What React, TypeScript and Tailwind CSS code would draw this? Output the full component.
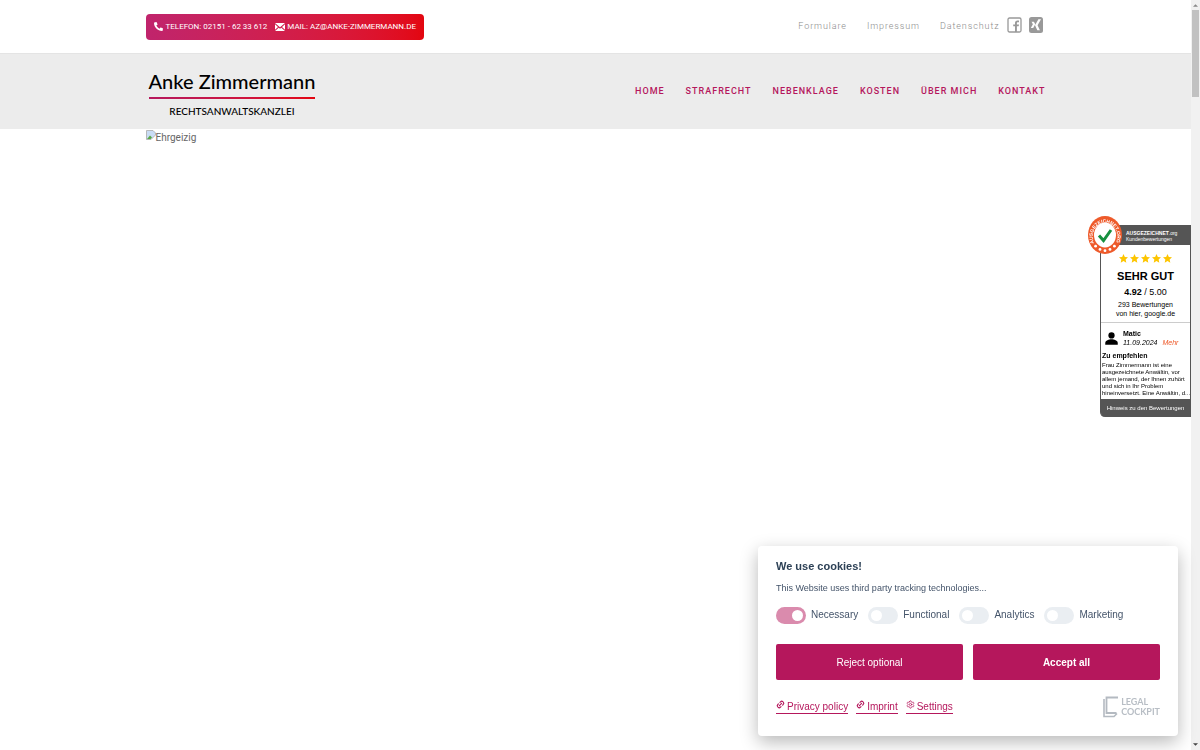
import React from 'react';
import { Link2, Settings } from 'lucide-react';
import { FaPhoneAlt } from 'react-icons/fa';

const metaLinks = ['Formulare', 'Impressum', 'Datenschutz'];
const navItems = ['Home', 'Strafrecht', 'Nebenklage', 'Kosten', 'Über mich', 'Kontakt'];
const categories = [
  { label: 'Necessary', active: true },
  { label: 'Functional', active: false },
  { label: 'Analytics', active: false },
  { label: 'Marketing', active: false },
];

const TopBar: React.FC = () => (
  <div className="border-b border-[#e4e4e4]">
    <div className="max-w-[900px] mx-auto h-[53px] flex items-center justify-between">
      <div className="flex items-center gap-[8px] h-[26px] px-[8px] rounded-[4px] bg-linear-to-r from-[#c0246c] to-[#e3060f] text-white text-[8px] uppercase whitespace-nowrap">
        <a href="#telefon" className="flex items-center gap-[3px]">
          <FaPhoneAlt className="size-[9px]" />
          Telefon: 02151 - 62 33 612
        </a>
        <a href="#mail" className="flex items-center gap-[2px]">
          <svg viewBox="0 0 20 16" className="w-[10px] h-2" fill="#fff">
            <path d="M0 0H20L10 8.500ZM0 2.500L6 8L0 13.500ZM20 2.500L14 8L20 13.500ZM7.500 9.300L10 11.300L12.500 9.300L20 16H0Z" />
          </svg>
          Mail: az@anke-zimmermann.de
        </a>
      </div>

      <div className="flex items-center text-[#8c8c8c] font-light text-[9px] tracking-widest">
        <div className="flex items-center gap-[20px]">
          {metaLinks.map((label) => (
            <a key={label} href="#meta">{label}</a>
          ))}
        </div>
        <a href="#facebook" aria-label="Facebook" className="ml-[7px] mb-[3px]">
          <svg viewBox="0 0 15 16" className="w-[15px] h-4">
            <rect x="1" y="1" width="13" height="14" rx="1.5" fill="none" stroke="#999" strokeWidth="1.3" />
            <path d="M8 15V9.2H6.2V7.4H8V6C8 4.5 8.9 3.5 10.5 3.5H12V5.2H10.9C10.2 5.2 9.9 5.5 9.9 6.2V7.4H12L11.7 9.2H9.9V15Z" fill="#999" />
          </svg>
        </a>
        <a href="#xing" aria-label="Xing" className="ml-[7px] mr-[3px] mb-[3px]">
          <svg viewBox="0 0 14 16" className="w-[14px] h-4">
            <rect width="14" height="16" rx="2.5" fill="#999" />
            <path d="M2.5 4.8H4.9L6.3 7.2L4.200 11H1.800L3.900 7.2ZM9.4 2.2H12L8.6 8.3L10.9 13.200H8.300L6 8.3Z" fill="#fff" />
          </svg>
        </a>
      </div>
    </div>
  </div>
);

const Header: React.FC = () => (
  <header className="bg-[#ececec]">
    <div className="max-w-[900px] mx-auto h-[75px] flex items-center justify-between">
      <a href="#home" className="ml-[3px] flex flex-col items-center text-black font-['Lato'] font-medium">
        <span className="text-[20px] leading-[32px]">Anke Zimmermann</span>
        <span className="w-full h-[2px] bg-linear-to-r from-[#b5175c] to-[#e3060f]" />
        <span className="text-[10px] leading-[14px] mt-[5px]">RECHTSANWALTSKANZLEI</span>
      </a>
      <nav className="flex items-center gap-[21px] text-[#b5175c] text-[9px] font-medium tracking-[1px] uppercase">
        {navItems.map((item) => (
          <a key={item} href="#nav">{item}</a>
        ))}
      </nav>
    </div>
  </header>
);

const Seal: React.FC = () => (
  <svg viewBox="0 0 34 38" preserveAspectRatio="none" className="absolute left-[-13px] top-[-9px] w-[34px] h-[38px]">
    <ellipse cx="17" cy="19" rx="17" ry="19" fill="#ee5a2a" />
    <ellipse cx="17" cy="19" rx="11" ry="12.5" fill="#fff" />
    <path d="M11 19.500L15.500 24.500L23 14" fill="none" stroke="#16903f" strokeWidth="3" />
    <path id="seal-arc" d="M6 27A12.300 14 0 1 1 28 27" fill="none" />
    <text fontSize="4.8" fontWeight="700" fill="#fff" fontFamily="Liberation Sans">
      <textPath href="#seal-arc">AUSGEZEICHNET.ORG</textPath>
    </text>
    <g fill="#fff">
      <circle cx="7.6" cy="30.2" r="1.4" />
      <circle cx="12" cy="33.4" r="1.4" />
      <circle cx="17" cy="34.7" r="1.4" />
      <circle cx="22" cy="33.4" r="1.4" />
      <circle cx="26.4" cy="30.2" r="1.4" />
    </g>
  </svg>
);

const Star: React.FC = () => (
  <svg viewBox="0 0 24 24" className="size-[9px]" fill="#fdc500">
    <path d="M12 0l3.6 8 8.4.9-6.300 5.700 1.800 8.500L12 18.800 4.500 23.100l1.800-8.500L0 8.900 8.400 8z" />
  </svg>
);

const RatingWidget: React.FC = () => (
  <aside className="fixed right-[9px] top-[225px] w-[91px] font-['Liberation_Sans',sans-serif] text-black bg-white border-x border-[#555] rounded-bl-[5px]">
    <Seal />
    <div className="bg-[#555] text-white h-5 pl-[25px] pt-[5px] text-[5px] leading-[6px] whitespace-nowrap">
      <p><b>AUSGEZEICHNET</b>.org</p>
      <p>Kundenbewertungen</p>
    </div>
    <div className="flex justify-center gap-[2px] mt-[9px]">
      {[1, 2, 3, 4, 5].map((n) => (
        <Star key={n} />
      ))}
    </div>
    <div className="text-center border-b border-[#ccc] pb-[4px]">
      <p className="text-[11px] leading-4 font-bold mt-[5px]">SEHR GUT</p>
      <p className="text-[9px] leading-4"><b>4.92</b> / 5.00</p>
      <p className="text-[7px] leading-[9px]">293 Bewertungen<br />von hier, google.de</p>
    </div>
    <div className="flex items-center gap-[4px] pl-[3px] pt-[6px] text-[7px] leading-[9px]">
      <svg viewBox="0 0 24 24" className="size-[15px]">
        <circle cx="12" cy="7" r="5" />
        <path d="M2 22v-3c0-4 6-6 10-6s10 2 10 6v3z" />
      </svg>
      <div>
        <p className="font-bold">Matic</p>
        <p className="italic">11.09.2024 <a href="#mehr" className="text-[#ee5a2a] ml-[3px]">Mehr</a></p>
      </div>
    </div>
    <div className="px-px pt-[4px] pb-[2px]">
      <p className="text-[7px] leading-[9px] font-bold">Zu empfehlen</p>
      <p className="text-[6px] leading-[7px] mt-[2px] whitespace-nowrap">
        Frau Zimmermann ist eine<br />
        ausgezeichnete Anwältin, vor<br />
        allem jemand, der Ihnen zuhört<br />
        und sich in Ihr Problem<br />
        hineinversetzt. Eine Anwältin, d...
      </p>
    </div>
    <a href="#hinweis" className="block bg-[#555] text-white text-center text-[6px] leading-[18px] rounded-bl-[4px] whitespace-nowrap">
      Hinweis zu den Bewertungen
    </a>
  </aside>
);

const CookieDialog: React.FC = () => (
  <section
    aria-label="Cookies"
    className="fixed right-[22px] bottom-[14px] w-[420px] bg-white rounded-[4px] px-[18px] pt-[12px] pb-[18px] shadow-[0_6px_18px_rgba(0,0,0,0.28)] text-[#44546a] font-['Liberation_Sans',sans-serif]"
  >
    <h2 className="text-[11px] leading-4 font-bold text-[#2d4156]">We use cookies!</h2>
    <p className="text-[9px] leading-4 mt-[6px]">This Website uses third party tracking technologies...</p>
    <div className="flex items-center gap-[10px] mt-[10px] text-[10px] leading-[18px]">
      {categories.map(({ label, active }) => (
        <label key={label} className="flex items-center gap-[5px]">
          <input
            type="checkbox"
            defaultChecked={active}
            className="appearance-none flex items-center w-[30px] h-[17px] rounded-full bg-[#eaeef2] px-[3px] before:block before:size-[11px] before:rounded-full before:bg-white checked:bg-[#da8bad] checked:justify-end"
          />
          {label}
        </label>
      ))}
    </div>
    <div className="grid grid-cols-2 gap-[10px] mt-5 text-white text-[10px]">
      <button className="h-[36px] rounded-[2px] bg-[#b5175c]">Reject optional</button>
      <button className="h-[36px] rounded-[2px] bg-[#b5175c] font-bold">Accept all</button>
    </div>
    <div className="flex items-center justify-between mt-4">
      <div className="flex gap-[8px] text-[#b5175c] text-[10px] leading-[13px]">
        <a href="#privacy" className="flex gap-[2px] border-b border-current">
          <Link2 className="size-[9px] -rotate-45" strokeWidth={3} />Privacy policy
        </a>
        <a href="#imprint" className="flex gap-[2px] border-b border-current">
          <Link2 className="size-[9px] -rotate-45" strokeWidth={3} />Imprint
        </a>
        <a href="#settings" className="flex gap-[2px] border-b border-current">
          <Settings className="size-[9px]" strokeWidth={2} />Settings
        </a>
      </div>
      <a href="#legal" className="flex items-center gap-[3px] text-[#b8bec5]">
        <svg viewBox="0 0 15 22" className="w-[15px] h-[22px]" fill="none" stroke="#b4bac1">
          <path d="M15 1.500H3.500V17H13.500" strokeWidth="1.800" />
          <path d="M1 3V20.500H11L14 17.500" strokeWidth="1.600" />
        </svg>
        <span className="font-['Lato'] font-bold text-[9px] leading-[10px]">LEGAL<br />COCKPIT</span>
      </a>
    </div>
  </section>
);

const Scrollbar: React.FC = () => (
  <div className="w-[9px] shrink-0 bg-[#f1f1f1] flex flex-col items-center justify-between py-[4px]">
    <div className="flex flex-col items-center gap-[3px]">
      <svg viewBox="0 0 6 3" className="w-[5px] h-[3px]" fill="#888"><path d="M0 3L3 0L6 3Z" /></svg>
      <div className="w-[7px] h-[87px] bg-[#c1c1c1]" />
    </div>
    <svg viewBox="0 0 6 3" className="w-[5px] h-[3px]" fill="#444"><path d="M0 0L3 3L6 0Z" /></svg>
  </div>
);

const App: React.FC = () => {
  return (
    <div className="min-h-screen flex bg-white font-['Roboto',sans-serif]">
      <div className="flex-1">
        <TopBar />
        <Header />
        <main className="max-w-[900px] mx-auto">
          <div className="flex items-start text-[10px] leading-[17px] text-[#666]">
            <svg viewBox="0 0 10 10" className="size-[10px] mt-px">
              <path d="M.5 .5H7L9.500 3V5L5 9.500H.5Z" fill="#c9dcf5" stroke="#aaa" strokeWidth=".8" />
              <path d="M1 9L4 5.500L6 7.500L4.500 9Z" fill="#58a846" />
            </svg>
            Ehrgeizig
          </div>
        </main>
      </div>
      <Scrollbar />
      <RatingWidget />
      <CookieDialog />
    </div>
  );
};

export default App;
